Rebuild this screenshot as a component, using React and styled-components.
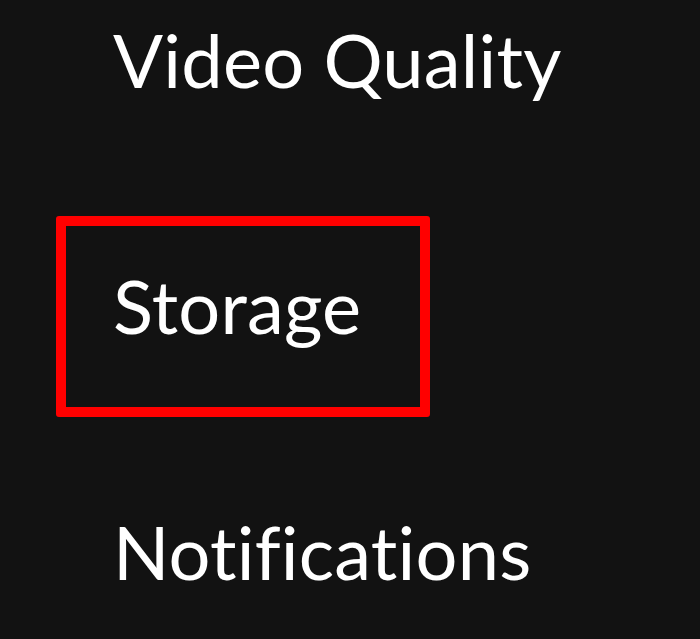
import React from "react";
import styled, { createGlobalStyle } from "styled-components";

const GlobalStyle = createGlobalStyle`
  html, body {
    margin: 0;
    padding: 0;
    background: #121212;
  }
  body {
    font-family: Lato, "Noto Sans", sans-serif;
    color: #ffffff;
    overflow: hidden;
  }
`;

const items = [
  { id: "video", label: "Video Quality" },
  { id: "storage", label: "Storage", highlighted: true },
  { id: "notifications", label: "Notifications" },
];

const App = () => {
  return (
    <>
      <GlobalStyle />
      <Page>
        <Menu>
          {items.map((item) => (
            <Item key={item.id} $highlighted={item.highlighted}>
              <Label>{item.label}</Label>
            </Item>
          ))}
        </Menu>
      </Page>
    </>
  );
};

export default App;

const Page = styled.div`
  width: 700px;
  height: 639px;
  background: #121212;
  overflow: hidden;
`;

const Menu = styled.ul`
  list-style: none;
  margin: -30px 0 0 56px;
  padding: 0;
  display: flex;
  flex-direction: column;
  gap: 45px;
`;

const Item = styled.li`
  box-sizing: border-box;
  width: 374px;
  height: 201px;
  padding: 0 0 22px 47px;
  display: flex;
  align-items: center;
  border: 10px solid ${(p) => (p.$highlighted ? "#ff0000" : "transparent")};
  border-radius: 3px;
`;

const Label = styled.span`
  font-size: 74px;
  font-weight: 400;
  letter-spacing: 0.2px;
  font-variant-ligatures: none;
  font-feature-settings: "liga" 0;
  white-space: nowrap;
  color: #ffffff;
`;
